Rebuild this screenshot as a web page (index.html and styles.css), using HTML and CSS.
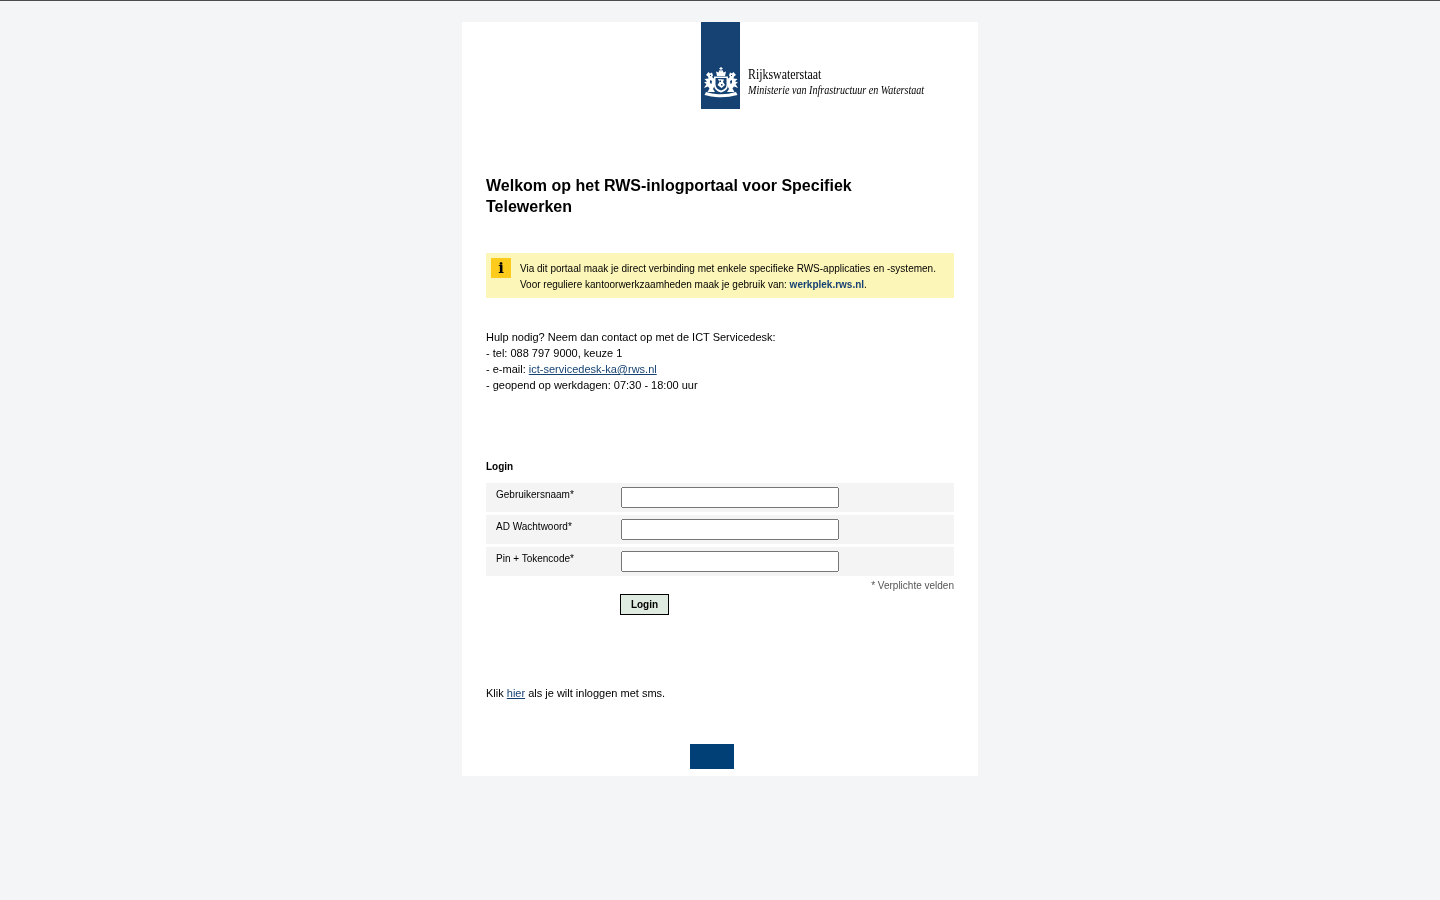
FILE: index.html
```html
<!DOCTYPE html>
<html lang="nl">
<head>
    <meta charset="UTF-8">
    <meta name="viewport" content="width=device-width, initial-scale=1.0">
    <title>RWS-inlogportaal</title>
    <link rel="stylesheet" href="styles.css">
</head>
<body>
    <div class="page">
        <header class="logo">
            <div class="logo-bar">
                <svg class="arms" width="34" height="32" viewBox="0 0 34 32">
                    <!-- crown -->
                    <path d="M13 10 L12 5.5 L14.5 6.5 L15.5 4 L17 5.5 L18.5 4 L19.5 6.5 L22 5.5 L21 10 Z" fill="#fff"/>
                    <path d="M16.4 1 H17.6 V2 H18.6 V3 H17.6 V5 H16.4 V3 H15.4 V2 H16.4 Z" fill="#fff"/>
                    <!-- shield -->
                    <path d="M10 10.5 H24 V19 Q24 24.5 17 26.5 Q10 24.5 10 19 Z" fill="#fff"/>
                    <path d="M11.5 12 H22.5 V18.5 Q22.5 23 17 24.5 Q11.5 23 11.5 18.5 Z" fill="#154273"/>
                    <path d="M14 13 L20 13.5 L19 16 L21 19 L17.5 22 L13.5 19 L15.5 16 Z" fill="#fff"/>
                    <path d="M15.5 14.5 H17 V16 H15.5 Z M17 18 H18.5 V19.5 H17 Z" fill="#154273"/>
                    <!-- lions -->
                    <path d="M2 9 L4.5 6 L6 7.5 L8 6.5 L9 9.5 L8 11 L10.5 13 L10.5 20 L9 23 L11 26 L3.5 26 L5.5 22.5 L4 20.5 L0 22 L2.5 18 L0 16.5 L3 15.5 L0.5 13 L4.5 12.5 L4 10.5 Z" fill="#fff"/>
                    <path d="M32 9 L29.5 6 L28 7.5 L26 6.5 L25 9.5 L26 11 L23.5 13 L23.5 20 L25 23 L23 26 L30.5 26 L28.5 22.5 L30 20.5 L34 22 L31.5 18 L34 16.5 L31 15.5 L33.5 13 L29.5 12.5 L30 10.5 Z" fill="#fff"/>
                    <path d="M6 14 L8 15 L7.5 18 L6 17 Z M28 14 L26 15 L26.5 18 L28 17 Z M6 9 H7 V10 H6 Z M27 9 H28 V10 H27 Z" fill="#154273"/>
                    <!-- ribbon -->
                    <path d="M2 26 Q17 30.5 32 26 L33.5 29 Q17 33.5 0.5 29 Z" fill="#fff"/>
                </svg>
            </div>
            <div class="logo-text">
                <div class="logo-name">Rijkswaterstaat</div>
                <div class="logo-sub">Ministerie van Infrastructuur en Waterstaat</div>
            </div>
        </header>

        <main class="content">
            <h1>Welkom op het RWS-inlogportaal voor Specifiek Telewerken</h1>

            <div class="notice">
                <span class="notice-icon">i</span>
                <p>Via dit portaal maak je direct verbinding met enkele specifieke RWS-applicaties en -systemen.<br>
                Voor reguliere kantoorwerkzaamheden maak je gebruik van: <a href="#" class="notice-link">werkplek.rws.nl</a>.</p>
            </div>

            <p class="help">Hulp nodig? Neem dan contact op met de ICT Servicedesk:<br>
            - tel: 088 797 9000, keuze 1<br>
            - e-mail: <a href="#">ict-servicedesk-ka@rws.nl</a><br>
            - geopend op werkdagen: 07:30 - 18:00 uur</p>

            <form class="login">
                <h2>Login</h2>
                <div class="row">
                    <label for="username">Gebruikersnaam*</label>
                    <input type="text" id="username" name="username">
                </div>
                <div class="row">
                    <label for="password">AD Wachtwoord*</label>
                    <input type="password" id="password" name="password">
                </div>
                <div class="row">
                    <label for="token">Pin + Tokencode*</label>
                    <input type="password" id="token" name="token">
                </div>
                <div class="required">* Verplichte velden</div>
                <button type="submit" class="submit">Login</button>
            </form>

            <p class="sms">Klik <a href="#">hier</a> als je wilt inloggen met sms.</p>
        </main>

        <div class="footer-block"></div>
    </div>
</body>
</html>
```

FILE: styles.css
```css
body {
    font-family: "Liberation Sans", Arial, sans-serif;
    margin: 0;
    padding: 0;
    min-height: 899px;
    background-color: #f4f5f7;
    border-top: 1px solid #4d4d4d;
    color: #000;
}
a {
    color: #154273;
}
.page {
    width: 516px;
    height: 754px;
    margin: 21px auto 0;
    background-color: #fff;
    display: flex;
    flex-direction: column;
    will-change: transform;
}
.logo {
    display: flex;
    align-items: flex-end;
    height: 87px;
    padding-left: 239px;
}
.logo-bar {
    width: 39px;
    height: 87px;
    background-color: #154273;
    display: flex;
    align-items: flex-end;
    justify-content: center;
}
.arms {
    margin-bottom: 11px;
}
.logo-text {
    margin-left: 8px;
    margin-bottom: 12px;
    font-family: "Liberation Serif", serif;
    color: #000;
}
.logo-name {
    font-size: 14.5px;
    line-height: 14px;
    margin-bottom: 2px;
    transform: scaleX(0.82);
    transform-origin: left;
    white-space: nowrap;
}
.logo-sub {
    font-size: 13px;
    line-height: 14px;
    font-style: italic;
    transform: scaleX(0.776);
    transform-origin: left;
    white-space: nowrap;
}
.content {
    padding: 0 24px;
}
h1 {
    max-width: 400px;
    font-size: 16px;
    line-height: 21px;
    font-weight: bold;
    margin: 66px 0 0;
}
.notice {
    display: flex;
    margin-top: 36px;
    height: 45px;
    box-sizing: border-box;
    padding: 5px;
    background-color: #fdf6b9;
}
.notice-icon {
    width: 20px;
    height: 20px;
    flex-shrink: 0;
    background-color: #fdcb1c;
    font-family: "DejaVu Serif", serif;
    font-weight: bold;
    font-size: 15px;
    line-height: 20px;
    text-align: center;
}
.notice p {
    margin: 3px 0 0 9px;
    font-size: 10px;
    line-height: 16px;
}
.notice-link {
    font-weight: bold;
    text-decoration: none;
}
.help {
    margin: 31px 0 0;
    font-size: 11px;
    line-height: 16px;
}
.login {
    margin-top: 66px;
}
h2 {
    font-size: 10px;
    line-height: 16px;
    font-weight: bold;
    margin: 0 0 8px;
}
.row {
    display: flex;
    height: 29px;
    margin-bottom: 3px;
    padding: 4px 0 0 10px;
    box-sizing: border-box;
    background-color: #f4f4f4;
}
.row label {
    width: 125px;
    font-size: 10px;
    line-height: 15px;
    color: #000;
}
.row input {
    width: 218px;
    height: 21px;
    box-sizing: border-box;
    margin: 0;
}
.required {
    margin-top: -1px;
    font-size: 10px;
    line-height: 16px;
    text-align: right;
    color: #555;
}
.submit {
    display: block;
    width: 49px;
    height: 21px;
    margin: 0 0 0 134px;
    padding: 0;
    background-color: #dfeae1;
    border: 1px solid #000;
    font-family: inherit;
    font-size: 10px;
    font-weight: bold;
    cursor: pointer;
}
.sms {
    margin: 70px 0 0;
    font-size: 11px;
    line-height: 16px;
}
.footer-block {
    width: 44px;
    height: 25px;
    margin: 43px 0 0 228px;
    background-color: #004077;
}
```
